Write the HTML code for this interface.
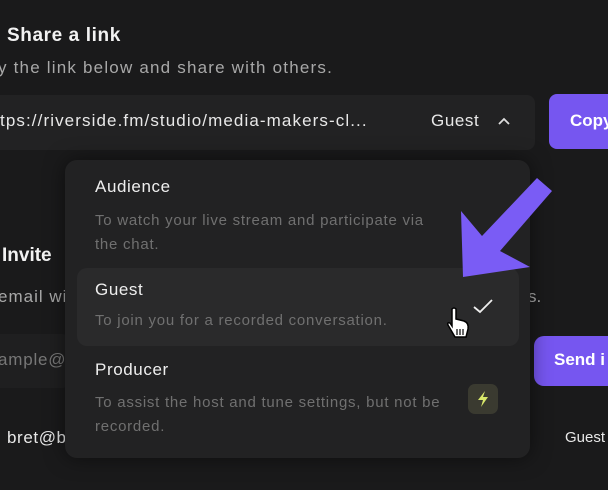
<!DOCTYPE html>
<html><head><meta charset="utf-8"><style>
body{margin:0;width:608px;height:490px;background:#1a1a1b;overflow:hidden;position:relative;font-family:"Liberation Sans",sans-serif;color:#f2f2f2}
.a{position:absolute;white-space:nowrap}
.t{font-size:17px;letter-spacing:0.6px;color:#eee}
.d{font-size:15px;letter-spacing:0.75px;color:#707070}
</style></head><body>
<div class="a" style="left:7px;top:25px;font-size:19px;font-weight:bold;letter-spacing:0.6px">Share a link</div>
<div class="a" style="left:-2px;top:58px;font-size:17px;letter-spacing:1.2px;color:#a8a8a8">y the link below and share with others.</div>
<div class="a" style="left:-10px;top:95px;width:545px;height:55px;background:#222223;border-radius:8px"></div>
<div class="a" style="left:0;top:111px;font-size:17px;letter-spacing:1.1px;color:#e8e8e8">tps://riverside.fm/studio/media-makers-cl...</div>
<div class="a" style="left:431px;top:111px;font-size:17px;letter-spacing:0.6px;color:#e8e8e8">Guest</div>
<svg class="a" style="left:496px;top:115px" width="16" height="12"><path d="M3 9 L8 4 L13 9" stroke="#ddd" stroke-width="1.8" fill="none"/></svg>
<div class="a" style="left:549px;top:94px;width:80px;height:55px;background:#7656f0;border-radius:8px"></div>
<div class="a" style="left:570px;top:111px;font-size:17px;font-weight:bold;color:#fff">Copy</div>

<div class="a" style="left:2px;top:245px;font-size:19px;font-weight:bold">Invite</div>
<div class="a" style="left:-2px;top:287px;font-size:17px;letter-spacing:1px;color:#a8a8a8">email wi</div>
<div class="a" style="left:528px;top:287px;font-size:17px;color:#a8a8a8">s.</div>
<div class="a" style="left:-10px;top:334px;width:80px;height:54px;background:#1f1f20;border-radius:8px"></div>
<div class="a" style="left:-2px;top:350px;font-size:17px;letter-spacing:0.8px;color:#777">ample@</div>
<div class="a" style="left:534px;top:336px;width:90px;height:50px;background:#7656f0;border-radius:10px"></div>
<div class="a" style="left:554px;top:350px;font-size:17px;font-weight:bold;color:#fff">Send i</div>
<div class="a" style="left:7px;top:428px;font-size:17px;letter-spacing:0.6px;color:#e8e8e8">bret@b</div>
<div class="a" style="left:565px;top:429px;font-size:15px;color:#e8e8e8">Guest</div>

<div class="a" style="left:65px;top:160px;width:465px;height:298px;background:#222223;border-radius:12px;box-shadow:0 0 20px rgba(0,0,0,.5)"></div>
<div class="a t" style="left:95px;top:177px">Audience</div>
<div class="a d" style="left:95px;top:209px;line-height:24px">To watch your live stream and participate via<br>the chat.</div>
<div class="a" style="left:77px;top:268px;width:442px;height:78px;background:#2a2a2b;border-radius:10px"></div>
<div class="a t" style="left:95px;top:280px">Guest</div>
<div class="a d" style="left:95px;top:312px">To join you for a recorded conversation.</div>
<svg class="a" style="left:470px;top:297px" width="26" height="20"><path d="M4 10 L10 15 L22 3" stroke="#eee" stroke-width="1.8" fill="none"/></svg>
<svg class="a" style="left:444px;top:305px" width="30" height="36"><path d="M8 4 Q10 2 12 4 L12 14 L20 16 Q25 18 24 24 L22 32 L11 32 L4 20 Q3 17 6 18 L8 21 Z" fill="#fff" stroke="#000" stroke-width="1.5"/><path d="M13 24V30M16 24V30M19 24V30" stroke="#000" stroke-width="1.2"/></svg>
<div class="a t" style="left:95px;top:360px">Producer</div>
<div class="a d" style="left:95px;top:391px;line-height:24px">To assist the host and tune settings, but not be<br>recorded.</div>
<div class="a" style="left:468px;top:384px;width:30px;height:30px;background:#3a3a30;border-radius:7px"></div>
<svg class="a" style="left:475px;top:390px" width="16" height="18"><path d="M10 1 L3 10 L8 10 L6 17 L13 7 L8 7 Z" fill="#d8e86a"/></svg>

<svg class="a" style="left:0;top:0" width="608" height="490"><polygon points="537,178 552,191 500,251 530,267 463,277 461,211 482,236" fill="#7a5cf5"/></svg>
</body></html>
